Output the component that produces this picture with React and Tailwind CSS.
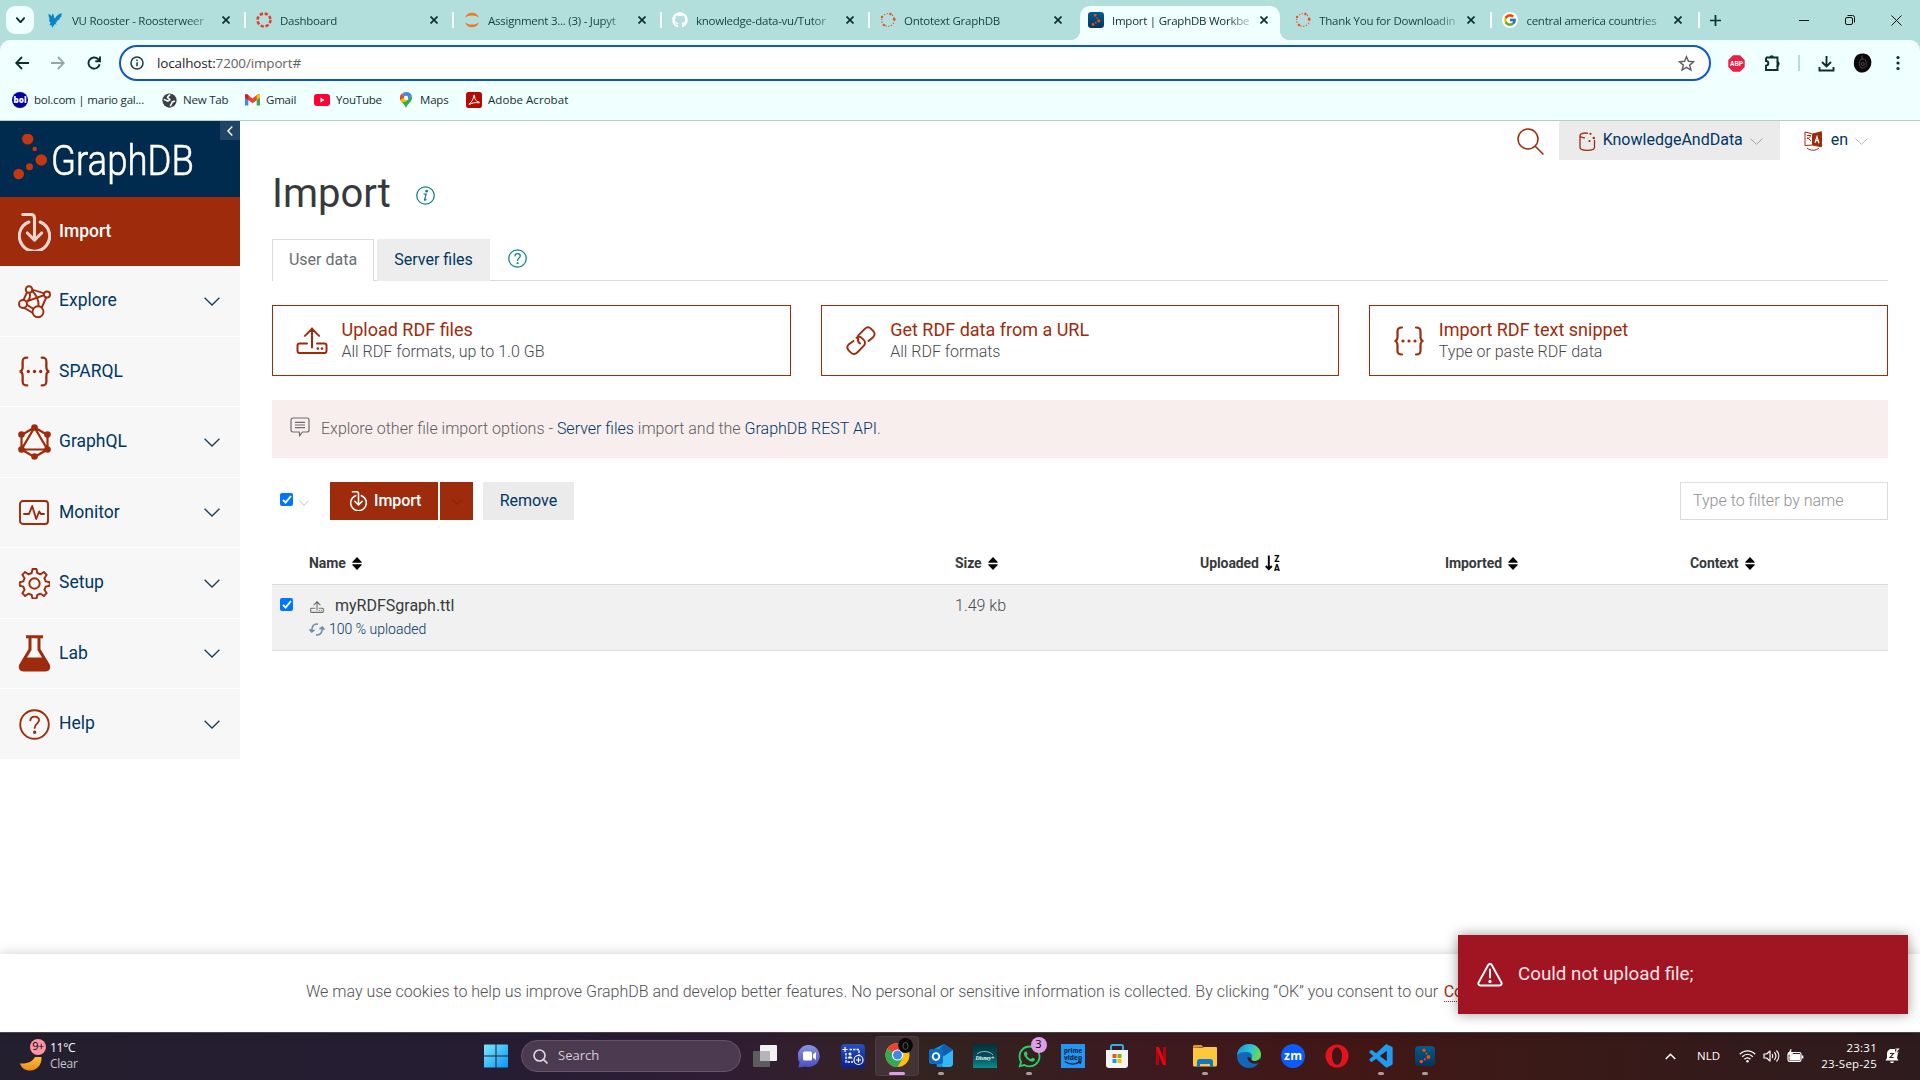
import React from "react";
import { FcGoogle } from "react-icons/fc";
import { FaGithub, FaWhatsapp } from "react-icons/fa";
import { BiLogoVisualStudio } from "react-icons/bi";

const UI = "font-['Open_Sans','Noto_Sans',sans-serif]";

/* ---------- shared drawings ---------- */

function Chevron({ className = "", w = 16, h = 9, sw = 1.3, color = "#003663" }) {
  return (
    <svg className={className} width={w} height={h} viewBox="0 0 16 9" fill="none" stroke={color} strokeWidth={sw} preserveAspectRatio="none">
      <path d="M.6.8 8 8l7.4-7.2" />
    </svg>
  );
}

function Cross({ size = 8, color = "#0b2f2c", sw = 1.7 }) {
  return (
    <svg width={size} height={size} viewBox="0 0 8 8" stroke={color} strokeWidth={sw}>
      <path d="M.5.5l7 7M7.5.5l-7 7" />
    </svg>
  );
}

function GraphDots({ size }) {
  return (
    <svg width={size} height={size} viewBox="0 0 20 20">
      <defs>
        <linearGradient id="gdb" x1="0" y1="0" x2="0" y2="1">
          <stop offset="0" stopColor="#045a8a" />
          <stop offset="1" stopColor="#02365e" />
        </linearGradient>
      </defs>
      <rect width="20" height="20" rx="4" fill="url(#gdb)" />
      <g fill="#f04e16">
        <circle cx="9" cy="4.2" r="1.7" />
        <circle cx="11.3" cy="7.5" r=".9" />
        <circle cx="13.4" cy="11" r="2" />
        <circle cx="9.8" cy="13.3" r="1.1" />
        <circle cx="6.3" cy="15.6" r="1.8" />
      </g>
    </svg>
  );
}

function DashedRing({ color, w = 2.6, dash = "3.3 1.75", r = 6.45 }) {
  return (
    <svg width="16" height="16" viewBox="0 0 16 16" fill="none">
      <circle cx="8" cy="8" r={r} stroke={color} strokeWidth={w} strokeDasharray={dash} />
    </svg>
  );
}

function OntoRing() {
  return (
    <svg width="16" height="16" viewBox="0 0 16 16" fill="none">
      <circle cx="8" cy="8" r="6.4" stroke="#e8613a" strokeWidth="1.3" strokeDasharray="1.2 1.6" />
      <g fill="#e8532a">
        <circle cx="2" cy="5" r="1.2" />
        <circle cx="10.5" cy="2" r="1.2" />
        <circle cx="14.2" cy="7.2" r="1.4" />
        <circle cx="4" cy="13" r="1.3" />
      </g>
    </svg>
  );
}

/* ---------- browser tabs ---------- */

const favicons = {
  vu: (
    <svg width="16" height="16" viewBox="0 0 16 16" fill="#0a84c9">
      <path d="M.5 2c1.500.3 2.500 1.300 3 2.600L4.500 1.500c1.200 1 1.600 2.300 1.500 3.800l1 1.200C8.500 3.500 11 1.500 14 1.200c-.3.800-.3 1.500-1.100 2.200.6.100.7.200.9.300-.7 1.300-1.600 2-2.700 2.500l1 .2c-1.200 1.500-2.200 2-3.500 2.400l.8 1.200-2 .600 1.200 2.200-1.800-.9-2.600 4-.8-3-2 .4 1.200-2.600C.9 9.500.9 8 1.500 6.800 1 5.500.4 3.700.5 2z" />
    </svg>
  ),
  canvas: <DashedRing color="#e2402f" />,
  jupyter: (
    <svg width="16" height="16" viewBox="0 0 16 16" fill="#f37726">
      <path d="M1.200 5.500C2 2.600 4.700.7 8 .7s6 1.900 6.800 4.800C13.400 4.200 10.900 3.400 8 3.400s-5.400.8-6.800 2.100z" />
      <path d="M1.200 10.500c.8 2.900 3.500 4.800 6.800 4.800s6-1.900 6.800-4.800c-1.400 1.300-3.900 2.100-6.800 2.100s-5.400-.8-6.800-2.100z" />
    </svg>
  ),
  github: <FaGithub size={16} color="#ffffff" />,
  onto: <OntoRing />,
  graphdb: <GraphDots size={16} />,
  google: (
    <span className="flex size-4 items-center justify-center rounded-full bg-white">
      <FcGoogle size={14} />
    </span>
  ),
};

const tabs = [
  { icon: "vu", title: "VU Rooster - Roosterweer" },
  { icon: "canvas", title: "Dashboard" },
  { icon: "jupyter", title: "Assignment 3... (3) - Jupyt" },
  { icon: "github", title: "knowledge-data-vu/Tutor" },
  { icon: "onto", title: "Ontotext GraphDB" },
  { icon: "graphdb", title: "Import | GraphDB Workbe", active: true },
  { icon: "onto", title: "Thank You for Downloadin" },
  { icon: "google", title: "central america countries" },
];

function BrowserTab({ icon, title, active, sep, narrow }) {
  return (
    <div
      className={
        "relative flex h-[34px] shrink-0 items-center pl-2 " +
        (narrow ? "w-[207.200px] " : "w-[208px] ") +
        (active ? "text-[#06302c]" : "text-[#173f3b]")
      }
    >
      {active && (
        <>
          <div className="absolute top-0 left-0 h-[34px] w-[200px] rounded-t-[10px] bg-[#f0ffff]" />
          <div className="absolute bottom-0 -left-2.5 size-2.5 bg-[radial-gradient(circle_at_0_0,transparent_10px,#f0ffff_10.500px)]" />
          <div className="absolute right-[-3px] bottom-0 size-2.5 bg-[radial-gradient(circle_at_100%_0,transparent_10px,#f0ffff_10.500px)]" />
        </>
      )}
      <span className="relative mb-[6px] flex size-4 shrink-0 items-center justify-center">{favicons[icon]}</span>
      <span className="relative mb-[4px] ml-2 w-[140px] text-[11.500px] tracking-[-0.250px] whitespace-nowrap [mask-image:linear-gradient(to_right,#000_82%,transparent_104%)]">
        {title}
      </span>
      <span className={"relative mb-[6px] flex w-2 shrink-0 " + (narrow ? "ml-2" : "ml-2.5")}>
        <Cross />
      </span>
      {sep && <span className="absolute top-1.5 right-[2px] h-4 w-0.5 bg-white/90" />}
    </div>
  );
}

function TabStrip() {
  return (
    <div className={"flex h-10 items-start bg-[#b2dfdc] pt-1.5 " + UI}>
      <div className="mr-[6px] ml-1.5 flex size-7 items-center justify-center rounded-[9px] bg-[#f0ffff]">
        <Chevron w={9} h={6} sw={3} color="#0b2f2c" />
      </div>
      {tabs.map((t, i) => (
        <BrowserTab key={t.title} {...t} sep={i !== 4 && i !== 5} narrow={i > 4} />
      ))}
      <div className="ml-[6px] flex h-7 w-4 items-center justify-center">
        <svg width="11" height="11" viewBox="0 0 11 11" stroke="#0b2f2c" strokeWidth="1.700">
          <path d="M5.500 0v11M0 5.500h11" />
        </svg>
      </div>
      <div className="mr-[18px] ml-auto flex h-7 items-center gap-[36px]">
        <svg width="10" height="10" viewBox="0 0 10 10" stroke="#111"><path d="M0 5.500h10" /></svg>
        <svg width="10" height="10" viewBox="0 0 10 10" stroke="#111" fill="none">
          <rect x=".5" y="2.500" width="7" height="7" rx="1.500" />
          <path d="M2.500.5h5a2 2 0 0 1 2 2v5" />
        </svg>
        <svg width="11" height="11" viewBox="0 0 11 11" stroke="#111"><path d="M.5.500l10 10M10.500.500l-10 10" /></svg>
      </div>
    </div>
  );
}

/* ---------- address row ---------- */

function AddressRow() {
  return (
    <div className={"flex h-[46px] items-center pt-0 " + UI}>
      <div className="flex w-[119px] shrink-0 items-center gap-[22px] pl-[15px]">
        <svg width="14" height="14" viewBox="0 0 14 14" fill="none" stroke="#0b2f2c" strokeWidth="1.800"><path d="M14 7H1.500M7 1 1.200 7 7 13" /></svg>
        <svg width="14" height="14" viewBox="0 0 14 14" fill="none" stroke="#8fa9a7" strokeWidth="1.800"><path d="M0 7h12.500M7 1l5.800 6L7 13" /></svg>
        <svg width="14" height="14" viewBox="0 0 14 14" fill="none" stroke="#0b2f2c" strokeWidth="1.900"><path d="M12.600 8.200A5.600 5.600 0 1 1 11 3l1.500 1.700" /><path d="M13 .5v4.700H8.300" /></svg>
      </div>
      <div className="flex h-9 w-[1592px] shrink-0 items-center rounded-full border-2 border-[#0b57d0] bg-white px-1">
        <span className="flex size-6 items-center justify-center rounded-full bg-[#f0ffff]">
          <svg width="14" height="14" viewBox="0 0 14 14" fill="none" stroke="#333" strokeWidth="1.500">
            <circle cx="7" cy="7" r="6" />
            <path d="M7 6.200v4M7 3.500v1.500" />
          </svg>
        </span>
        <span className="ml-[8px] text-[13.500px] tracking-[-0.150px] text-[#5f6363]">
          <span className="text-[#1f1f1f]">localhost:</span>7200/import#
        </span>
        <svg className="mr-[10px] ml-auto" width="17" height="17" viewBox="0 0 18 18" fill="none" stroke="#5c6060" strokeWidth="1.500">
          <path d="m9 1.800 2.100 4.900 5.400.5-4.100 3.500 1.300 5.200L9 13.100l-4.700 2.800 1.300-5.200-4.100-3.500 5.400-.5z" />
        </svg>
      </div>
      <svg className="ml-[17px]" width="17" height="17" viewBox="0 0 17 17">
        <path d="M5 .3h7L16.700 5v7L12 16.700H5L.3 12V5z" fill="#ed1e45" />
        <text x="8.500" y="11" textAnchor="middle" fontSize="7" fontWeight="700" fill="#fff" fontFamily="Liberation Sans" textLength="13" lengthAdjust="spacingAndGlyphs">ABP</text>
      </svg>
      <svg className="ml-[19px]" width="18" height="18" viewBox="0 0 18 18" fill="none" stroke="#0b2f2c" strokeWidth="1.900">
        <path d="M2 3.500h11.500v4.300M2 3.500V7a2.300 2.300 0 0 1 0 4.600V16h11.500v-4.300" />
        <path d="M5.500 3.500a2.200 2.200 0 0 1 4.400 0zM13.500 7.500a2.200 2.200 0 0 1 0 4.400z" fill="#0b2f2c" stroke="none" />
        <path d="M13.500 7v6" />
      </svg>
      <span className="ml-[16px] h-4 w-0.5 bg-[#b2dfdc]" />
      <svg className="ml-[18px]" width="17" height="17" viewBox="0 0 17 17" fill="none" stroke="#0b2f2c" strokeWidth="1.900">
        <path d="M8.500 1v10M4 7l4.500 4.500L13 7M1.500 12v3.500h14V12" />
      </svg>
      <svg className="ml-[18px]" width="19" height="20" viewBox="0 0 19 20">
        <path d="M5 1.500C8 0 12 0 15 2c3 2.500 4 6 3 10-1 4-4 7-8.500 7.500C5 20 2 16.500 1 12.500.5 8 1.500 3.500 5 1.500z" fill="#0a0a0a" />
        <g fill="none" stroke="#555" strokeWidth=".8"><ellipse cx="9.800" cy="10.500" rx="3.500" ry="4.500" /><circle cx="9.800" cy="11" r="1.500" /><path d="M9 2.500v4" /></g>
      </svg>
      <svg className="ml-[24px]" width="4" height="16" viewBox="0 0 4 16" fill="#0b2f2c">
        <circle cx="2" cy="2.500" r="1.600" /><circle cx="2" cy="8" r="1.600" /><circle cx="2" cy="13.500" r="1.600" />
      </svg>
    </div>
  );
}

/* ---------- bookmarks ---------- */

const bookmarks = [
  {
    label: "bol.com | mario gal...",
    width: "w-[127px]",
    icon: (
      <svg width="16" height="16" viewBox="0 0 16 16">
        <circle cx="8" cy="8" r="8" fill="#0000a4" />
        <text x="8" y="11" textAnchor="middle" fontSize="8" fontWeight="800" fill="#fff" fontFamily="Open Sans" textLength="13">bol</text>
      </svg>
    ),
  },
  {
    label: "New Tab",
    width: "w-[61px]",
    icon: (
      <svg width="15" height="15" viewBox="0 0 16 16">
        <circle cx="8" cy="8" r="7.600" fill="#3c4043" />
        <path d="M8.500 1.600c-1 1.800-2.600 1.700-2.600 3.200 0 1.400 2.500.8 2.500 2.200 0 1.200-1.900 1-2.400 1.600L2 6.800M9 14.200c0-2.200 1.600-2.600 1.600-4 0-1.300 1.500-.7 3.200-1.600" fill="none" stroke="#f0ffff" strokeWidth="1.700" />
      </svg>
    ),
  },
  {
    label: "Gmail",
    width: "w-[48px]",
    icon: (
      <svg width="15" height="12" viewBox="0 0 15 12">
        <path d="M0 2v9.500h3.300V4.500z" fill="#4285f4" />
        <path d="M15 2v9.500h-3.300V4.500z" fill="#34a853" />
        <path d="M0 1.500C0 .5 1.500 0 2.500.6l5 3.900 5-3.900C13.500 0 15 .5 15 1.500v2.200L7.500 9.300 0 3.700z" fill="#ea4335" />
        <path d="M12.500.6C13.500 0 15 .5 15 1.500v2.200l-3.300 2.400V1.300z" fill="#fbbc04" />
        <path d="M2.500.6C1.500 0 0 .5 0 1.500v2.200l3.300 2.400V1.300z" fill="#c5221f" />
      </svg>
    ),
  },
  {
    label: "YouTube",
    width: "w-[62px]",
    icon: (
      <svg width="16" height="12" viewBox="0 0 16 12"><rect width="16" height="12" rx="3" fill="#ff0033" /><path d="m6.500 3.500 4 2.500-4 2.500z" fill="#fff" /></svg>
    ),
  },
  {
    label: "Maps",
    width: "w-[46px]",
    icon: (
      <svg width="12" height="16" viewBox="0 0 12 16">
        <path d="M6 0a6 6 0 0 1 6 6c0 4-4.500 5.500-6 10C4.500 11.500 0 10 0 6a6 6 0 0 1 6-6z" fill="#34a853" />
        <path d="M6 0a6 6 0 0 1 5.600 4L6 9.500 2 10.500C.8 9.300 0 8 0 6a6 6 0 0 1 6-6z" fill="#fbbc04" />
        <path d="M6 0a6 6 0 0 1 5.600 4L8 7.500 2 2z" fill="#4285f4" />
        <path d="M1.500 2 5 5 0 8C-.2 5.500 0 3.700 1.500 2z" fill="#ea4335" />
        <circle cx="6" cy="6" r="2.200" fill="#fff" />
      </svg>
    ),
  },
  {
    label: "Adobe Acrobat",
    width: "w-[90px] tracking-[0.050px]",
    icon: (
      <svg width="16" height="16" viewBox="0 0 16 16"><rect width="16" height="16" rx="2.500" fill="#b30b00" /><path d="M3 12c2-1 4.500-4.500 4.700-8.300.1-1 1-.8.900.1C8.300 7 10 9.600 13 10c.8.200.5 1-.2.900C9.500 10.200 6 10.800 3.600 12.400c-.6.300-1-.1-.6-.4z" fill="none" stroke="#fff" strokeWidth="1" /></svg>
    ),
  },
];

function Bookmarks() {
  return (
    <div className={"flex h-[35px] items-center pb-[7px] pl-3 text-[11.500px] tracking-[-0.200px] text-[#15302e] " + UI}>
      {bookmarks.map((b) => (
        <div key={b.label} className="flex items-center">
          <span className="flex w-4 justify-center">{b.icon}</span>
          <span className={"ml-1.5 whitespace-nowrap " + b.width}>{b.label}</span>
        </div>
      ))}
    </div>
  );
}

/* ---------- application icons ---------- */

function ImportIcon({ size, color, sw = 2 }) {
  return (
    <svg width={size} height={size * 1.15} viewBox="0 0 32 37" fill="none" stroke={color} strokeWidth={sw} strokeLinecap="round" strokeLinejoin="round">
      <path d="M10.500 8.800a14.800 14.800 0 1 0 11 0" />
      <path d="M4.500 1.500h8c2.500 0 3.500 1.200 3.500 3.500v21M9 19.500l7 7 7-7" />
    </svg>
  );
}

function Braces({ size }) {
  return (
    <svg width={size} height={size} viewBox="0 0 32 32" fill="none" stroke="#9d2b0c" strokeWidth="2.200" strokeLinecap="round">
      <path d="M9 2.500c-3.500 0-4.500 1-4.500 4v5c0 3-1 4.500-3 4.500 2 0 3 1.500 3 4.500v5c0 3 1 4 4.500 4M23 2.500c3.500 0 4.500 1 4.500 4v5c0 3 1 4.500 3 4.500-2 0-3 1.500-3 4.500v5c0 3-1 4-4.500 4" />
      <g fill="#9d2b0c" stroke="none"><circle cx="10" cy="16" r="1.600" /><circle cx="16" cy="16" r="1.600" /><circle cx="22" cy="16" r="1.600" /></g>
    </svg>
  );
}

function UploadIcon({ size, color = "#9d2b0c", sw = 2 }) {
  return (
    <svg width={size} height={size * 0.85} viewBox="0 0 32 27" fill="none" stroke={color} strokeWidth={sw} strokeLinecap="round" strokeLinejoin="round">
      <path d="M11 16.500H3.500a2 2 0 0 0-2 2v5.500a2 2 0 0 0 2 2h25a2 2 0 0 0 2-2v-5.500a2 2 0 0 0-2-2H21M16 20.500V1.500M9 8.800l7-7.300 7 7.300" />
      <g fill={color} stroke="none"><circle cx="21.800" cy="21.500" r="1.300" /><circle cx="26" cy="21.500" r="1.300" /></g>
    </svg>
  );
}

function QuestionIcon({ size, color, sw = 1.3 }) {
  return (
    <svg width={size} height={size} viewBox="0 0 20 20" fill="none" stroke={color} strokeWidth={sw} strokeLinecap="round">
      <circle cx="10" cy="10" r="9.200" />
      <path d="M7.300 7.300c.2-1.600 1.200-2.400 2.800-2.400 1.700 0 2.800 1 2.800 2.400 0 2.200-2.800 2.100-2.800 4.900" />
      <circle cx="10.100" cy="15" r=".5" fill={color} />
    </svg>
  );
}

const R = "#9d2b0c";
const menuIcons = {
  import: <ImportIcon size={33} color="#ecd5ce" sw={3} />,
  explore: (
    <svg width="33" height="33" viewBox="0 0 33 33" fill="none" stroke={R} strokeWidth="1.900">
      <path d="M9.200 7 5.200 15.500M8 16.700 26.500 10M13.500 5.500c5 4 7.500 9 7 16M28.500 12 23.500 23M9.500 16.500c2-2.200 3-5.500 2.200-9M14.500 4.800c6 1.500 9.500 2.500 12 4" />
      <g fill="#f7f7f7"><circle cx="11" cy="4.500" r="3.300" /><circle cx="29" cy="9.500" r="3" /><circle cx="5" cy="19" r="4" /><circle cx="20" cy="26.800" r="5.500" /></g>
      <path d="m6 22.800 8.500 5M8.800 19.800l6.500 4" />
    </svg>
  ),
  sparql: <Braces size={33} />,
  graphql: (
    <svg width="33" height="36" viewBox="0 0 33 36" fill="none" stroke={R} strokeWidth="2.200">
      <path d="M16.500 3.500 29.500 11v14.500L16.500 33 3.500 25.500V11zM16.500 3.500 29.500 25.500h-26z" />
      <g fill={R} stroke="none"><circle cx="16.500" cy="3.500" r="3.300" /><circle cx="29.500" cy="10.500" r="3.300" /><circle cx="29.500" cy="25.500" r="3.300" /><circle cx="16.500" cy="32.500" r="3.300" /><circle cx="3.500" cy="25.500" r="3.300" /><circle cx="3.500" cy="10.500" r="3.300" /></g>
    </svg>
  ),
  monitor: (
    <svg width="30" height="25" viewBox="0 0 30 25" fill="none" stroke={R} strokeWidth="1.900" strokeLinejoin="round" strokeLinecap="round">
      <rect x="1" y="1" width="28" height="23" rx="3" />
      <path d="M5 14h5l3.200-8 4 13 3-7.500 1.500 2.500H25" />
    </svg>
  ),
  setup: (
    <svg width="31" height="31" viewBox="0 0 31 31" fill="none" stroke={R} strokeWidth="1.900" strokeLinejoin="round">
      <circle cx="15.500" cy="15.500" r="5.200" />
      <path d="M13.500 1h4l.8 4 3.200 1.300 3.400-2.300 2.800 2.800-2.300 3.400 1.300 3.200 4 .8v3.600l-4 .8-1.300 3.200 2.300 3.400-2.800 2.800-3.400-2.300-3.200 1.300-.8 3.500h-4l-.8-3.500L9.500 25.700 6.100 28l-2.800-2.800 2.300-3.400-1.300-3.200-3.500-.8v-3.600l3.500-.8 1.300-3.200-2.300-3.400L6.100 4l3.400 2.300L12.700 5z" />
    </svg>
  ),
  lab: (
    <svg width="33" height="37" viewBox="0 0 33 37" fill="none" stroke={R} strokeWidth="3">
      <path d="M8 1.800h17M12 2v12.500L2.500 30.500c-1 2.500.3 4.500 3 4.500h22c2.700 0 4-2 3-4.500L21 14.500V2" />
      <path d="M8 22.500h17L30.500 32l-3 3h-22l-3-3z" fill={R} stroke="none" />
    </svg>
  ),
  help: <QuestionIcon size={31} color={R} sw={1.200} />,
};

const menu = [
  { id: "import", label: "Import", active: true },
  { id: "explore", label: "Explore", sub: true },
  { id: "sparql", label: "SPARQL" },
  { id: "graphql", label: "GraphQL", sub: true },
  { id: "monitor", label: "Monitor", sub: true },
  { id: "setup", label: "Setup", sub: true },
  { id: "lab", label: "Lab", sub: true },
  { id: "help", label: "Help", sub: true },
];

function Sidebar() {
  return (
    <aside className="w-60 shrink-0">
      <div className="relative flex h-[76px] items-center bg-[#002b4f] pl-3">
        <svg className="mt-[-3px]" width="36" height="48" viewBox="0 0 36 48" fill="#c4370f">
          <circle cx="15.700" cy="5" r="5.600" /><circle cx="22.700" cy="15" r="2.300" /><circle cx="29.300" cy="26" r="5.800" /><circle cx="17.500" cy="32.800" r="3.500" /><circle cx="6.700" cy="40" r="5.300" />
        </svg>
        <span className="mt-[3px] ml-[2.500px] origin-left scale-x-[0.870] text-[42px] leading-none font-light text-white [-webkit-text-stroke:0.600px_white]">GraphDB</span>
        <span className="absolute top-0 right-0 flex h-[19px] w-5 items-center justify-center bg-[#1f4466]">
          <svg width="6" height="10" viewBox="0 0 6 10" fill="none" stroke="#fff" strokeWidth="1.400"><path d="M5.300.6 1 5l4.300 4.400" /></svg>
        </span>
      </div>
      {menu.map((m) => (
        <div
          key={m.id}
          className={
            "flex items-center text-[17.500px] " +
            (m.active ? "h-[69.300px] bg-[#9d2b0c] font-medium text-white" : "h-[70.500px] border-b border-white bg-[#f7f7f7] text-[#003663]")
          }
        >
          <span className="ml-[17px] flex w-[34px] justify-center">{menuIcons[m.id]}</span>
          <span className="ml-2 pb-px">{m.label}</span>
          {m.sub && <Chevron className="mr-[20px] ml-auto" color="#1a3c58" w={16} />}
        </div>
      ))}
    </aside>
  );
}

/* ---------- main pane ---------- */

function TopBar() {
  return (
    <div className="flex h-[39px] items-center justify-end pr-[52px]">
      <svg className="mt-0.5 mr-[15px]" width="27" height="27" viewBox="0 0 27 27" fill="none" stroke={R} strokeWidth="1.500" strokeLinecap="round">
        <circle cx="11" cy="11" r="10" /><path d="m18.500 18.500 7.500 7.500" />
      </svg>
      <div className="flex h-[39px] w-[221px] items-center bg-[#ebebeb] pl-5 text-[#003663]">
        <svg className="mt-0.5" width="17" height="19" viewBox="0 0 17 19" fill="none" stroke={R} strokeWidth="1.300">
          <path d="M9 1.300c-4-.8-8 .3-8 2.200v12c0 1.600 3.300 2.800 7.300 2.800s7.200-1.200 7.200-2.800V8M1 3.800c.5 1.200 2.500 1.900 5 2" />
          <g fill={R} stroke="none"><circle cx="11.500" cy="1.800" r="1.100" /><circle cx="14.800" cy="6" r="1.200" /><circle cx="10.500" cy="9" r="1.100" /></g>
        </svg>
        <span className="ml-[7px] pb-px text-base">KnowledgeAndData</span>
        <Chevron className="mt-0.5 ml-[7px]" w={13} h={7} color="#9aa0a5" sw={1.200} />
      </div>
      <div className="ml-6 flex items-center text-[#003663]">
        <svg width="18" height="20" viewBox="0 0 18 20" fill="none" stroke={R}>
          <path d="M8.500 3 17.500.8v15L8.500 14z" fill={R} />
          <path d="M8.500 3 1 1v13.500l7.500-.5M3 4.500h4M3 7.500c2 0 3.500-1.500 3.500-3M3.500 6.500 7 10M3 17c3.500 3 9 3 12 0" />
          <path d="m11 11.800 2-6 2 6.500M11.500 9.700h3" stroke="#fff" strokeWidth="1.200" />
        </svg>
        <span className="ml-[9px] pb-px text-base">en</span>
        <Chevron className="mt-0.5 ml-[7px]" w={13} h={7} color="#b0b5b9" sw={1.200} />
      </div>
    </div>
  );
}

const sources = [
  { title: "Upload RDF files", sub: "All RDF formats, up to 1.0 GB", icon: <UploadIcon size={32} /> },
  {
    title: "Get RDF data from a URL",
    sub: "All RDF formats",
    icon: (
      <svg width="30" height="30" viewBox="0 0 30 30" fill="none" stroke={R} strokeWidth="1.900" strokeLinecap="round">
        <path d="M12.300 13.500c-1-1.700-.5-3.500.5-4.600l6-6c2-2 4.300-2.100 6.300-.1l2 2c2 2 2 4.400 0 6.400L22.500 15M10.500 11.700c2-1.300 4.300-.8 5.700.6l1.500 1.500c1.900 1.900 1.700 4.300 0 6l-6.500 6.700c-2 2-4.300 2.100-6.300.1l-2-2c-2-2-2-4.400 0-6.400L7.500 15M14 17.500c-1.500-1-2-2-2.200-3.500" />
      </svg>
    ),
  },
  { title: "Import RDF text snippet", sub: "Type or paste RDF data", icon: <Braces size={32} /> },
];

function Check() {
  return (
    <span className="flex size-[13px] shrink-0 items-center justify-center rounded-[2px] bg-[#0075ff]">
      <svg width="10" height="9" viewBox="0 0 10 9" fill="none" stroke="#fff" strokeWidth="1.900"><path d="m1 4.800 2.600 2.700L9 1" /></svg>
    </span>
  );
}

function SortIcon() {
  return (
    <svg width="10" height="13" viewBox="0 0 10 13" fill="#000">
      <path d="M5 0l4.500 4.700c.5.600.2 1.100-.5 1.100H1C.3 5.800 0 5.300.5 4.700zM5 13l4.500-4.700c.5-.6.2-1.100-.5-1.100H1c-.7 0-1 .5-.5 1.100z" />
    </svg>
  );
}

function SortZA() {
  return (
    <svg width="16" height="16" viewBox="0 0 16 16">
      <path d="M3.800.5v13M.8 11l3 3.200 3-3.200" stroke="#000" strokeWidth="1.900" fill="none" />
      <text x="9.300" y="6.800" fontSize="8.500" fontWeight="900" fontFamily="Roboto">Z</text>
      <text x="9" y="15.500" fontSize="8.500" fontWeight="900" fontFamily="Roboto">A</text>
    </svg>
  );
}

const columns = ["Size", "Uploaded", "Imported", "Context"];

function Main() {
  return (
    <main className="flex-1">
      <TopBar />
      <div className="mr-8 ml-8 flex flex-col">
        <div className="flex h-[66px] items-center">
          <h1 className="mt-0.5 text-[40px] leading-none text-[#373a3c]">Import</h1>
          <svg className="mt-[5px] ml-[25px]" width="19" height="19" viewBox="0 0 20 20" fill="none" stroke="#0d8182" strokeWidth="1.300">
            <circle cx="10" cy="10" r="9.200" />
            <path d="M8 8.500h2.700L9 14.300c-.2.800.9.700 2-.3" />
            <circle cx="11.200" cy="5.400" r=".8" fill="#0d8182" />
          </svg>
        </div>

        <div className="mt-[13px] flex h-[42px] items-end border-b border-[#dcdcdc]">
          <div className="-mb-px flex h-[42px] w-[102px] items-center justify-center border border-b-0 border-[#dcdcdc] bg-white pb-0.5 text-[#6a6e71]">User data</div>
          <div className="-mb-px ml-[3px] flex h-[42px] w-[113px] items-center justify-center bg-[#ededed] pb-px text-[#003663]">Server files</div>
          <span className="mb-[12px] ml-[18px]"><QuestionIcon size={19} color="#0d8182" /></span>
        </div>

        <div className="mt-6 grid grid-cols-3 gap-[30px]">
          {sources.map((s) => (
            <div key={s.title} className="flex h-[71px] items-center border border-[#9d2b0c] pl-[23px]">
              <span className="flex w-8 justify-center">{s.icon}</span>
              <div className="ml-[13.500px] pb-0.5">
                <div className="text-[18px] leading-6 text-[#9d2b0c]">{s.title}</div>
                <div className="leading-5 font-light text-[#45494c]">{s.sub}</div>
              </div>
            </div>
          ))}
        </div>

        <div className="mt-6 flex h-[58px] items-center bg-[#f7eeed] pl-[18px]">
          <svg className="mb-1" width="20" height="20" viewBox="0 0 20 20" fill="none" stroke="#6b6e70" strokeWidth="1.200" strokeLinejoin="round">
            <path d="M3 1h14a2 2 0 0 1 2 2v10a2 2 0 0 1-2 2h-4.500L9.500 19v-4H3a2 2 0 0 1-2-2V3a2 2 0 0 1 2-2zM5 5.300h10M5 8h10M5 10.700h10" />
          </svg>
          <span className="ml-[11px] font-light text-[#5b5e60]">
            Explore other file import options - <span className="text-[#003663]">Server files</span> import and the{" "}
            <span className="text-[#003663]">GraphDB REST API</span>.
          </span>
        </div>

        <div className="mt-6 flex h-[38px] items-center">
          <span className="mb-[3px] ml-2"><Check /></span>
          <Chevron className="mt-1 ml-[6px]" w={10} h={6} color="#b3b6b8" />
          <div className="ml-[21px] flex h-[38px] w-[108px] items-center bg-[#9d2b0c] pl-[20px] font-medium text-white">
            <ImportIcon size={17} color="#fff" sw={3} />
            <span className="ml-[7px] tracking-[-0.100px]">Import</span>
          </div>
          <div className="ml-0.5 flex h-[38px] w-[33px] items-center justify-center bg-[#9d2b0c]">
            <Chevron className="mt-0.5" w={10} h={6} color="#7d200a" />
          </div>
          <div className="ml-2.5 flex h-[38px] w-[91px] items-center justify-center bg-[#ebebeb] text-[#003663]">Remove</div>
          <div className="ml-auto flex h-[38px] w-[208px] items-center border border-[#dcdcdc] pl-3 font-light text-[#8e9092]">Type to filter by name</div>
        </div>

        <div className="mt-[23px] mb-px grid h-[40px] grid-cols-[683px_245px_245px_245px_1fr] items-center text-[14px] font-bold text-[#373a3c]">
          <div className="flex items-center gap-[6px] pl-[37px] tracking-[-0.100px]">Name <SortIcon /></div>
          {columns.map((c) => (
            <div key={c} className="flex items-center gap-[6px] tracking-[-0.080px]">
              {c} {c === "Uploaded" ? <SortZA /> : <SortIcon />}
            </div>
          ))}
        </div>
        <div className="grid h-[67px] grid-cols-[683px_1fr] border-y border-[#dcdcdc] bg-[#f1f1f1]">
          <div className="pt-[9px] pl-2">
            <div className="flex h-6 items-center">
              <span className="mb-[3px]"><Check /></span>
              <span className="mt-0.5 ml-[17px]"><UploadIcon size={14} color="#6b6f72" sw={2.500} /></span>
              <span className="ml-[11px] text-[#373a3c]">myRDFSgraph.ttl</span>
            </div>
            <div className="ml-[29px] flex h-[23px] items-center text-[14px] font-light text-[#003663]">
              <svg width="16" height="13" viewBox="0 0 16 13" fill="none" stroke="#6d8ca8" strokeWidth="1.600">
                <path d="M9 1.200C5 .3 2.500 3 2.800 8.500M.5 6.300l2.300 2.600 2.700-2M7 11.800c4 .9 6.500-1.800 6.200-7.300M15.500 6.700l-2.300-2.600-2.700 2" />
              </svg>
              <span className="ml-[4px]">100 % uploaded</span>
            </div>
          </div>
          <div className="pt-[9px] leading-6 font-light text-[#4a4d50]">1.49 kb</div>
        </div>
      </div>
    </main>
  );
}

/* ---------- taskbar ---------- */

const taskIcons = [
  <svg width="24" height="24" viewBox="0 0 24 24"><rect x="7" y="1" width="17" height="16" rx="1" fill="#f2f2f2" /><rect x="0" y="7" width="17" height="16" rx="1" fill="#5d5d5d" /><path d="M7 7h10v10H7z" fill="#b5b5b5" /></svg>,
  <svg width="23" height="23" viewBox="0 0 23 23"><defs><linearGradient id="chat" x2="0" y2="1"><stop stopColor="#8a93de" /><stop offset="1" stopColor="#4a4fc4" /></linearGradient></defs><path d="M11.500 0a11 11 0 1 1-4 21.500L.5 22.500l1-5.500A11 11 0 0 1 11.500 0z" fill="url(#chat)" /><rect x="5" y="6.500" width="9" height="9" rx="1.500" fill="#fff" /><path d="m15 9.500 3-2.500v8l-3-2.500z" fill="#fff" /></svg>,
  <svg width="24" height="24" viewBox="0 0 24 24" fill="none" stroke="#fff"><defs><linearGradient id="snip" x2="0" y2="1"><stop stopColor="#2850c0" /><stop offset="1" stopColor="#0b1f8f" /></linearGradient></defs><rect width="24" height="24" rx="4" fill="url(#snip)" stroke="none" /><path d="M4 3v5M1.500 5.500h5" strokeWidth="1.200" /><path d="M8.500 5.500H18v6M5 9v9h7" strokeWidth="1.300" strokeDasharray="2.500 1" /><circle cx="9" cy="10" r="1.500" fill="#fff" stroke="none" /><path d="M6.500 14.500c.5-3 4.500-3 5 0z" fill="#fff" stroke="none" /><circle cx="17.500" cy="16" r="4.500" strokeWidth="1.200" /><path d="M17.500 13.500v5M15 16h5" strokeWidth="1.200" /></svg>,
  <svg width="32" height="30" viewBox="0 0 32 30"><g transform="translate(4.500 5)"><circle cx="12" cy="12" r="12" fill="#fbc116" /><path d="M12 12 1.600 6A12 12 0 0 1 22.400 6z" fill="#ea4335" /><path d="M1.600 6A12 12 0 0 0 12 24l5.200-9L12 12z" fill="#34a853" /><circle cx="12" cy="12" r="5.600" fill="#fff" /><circle cx="12" cy="12" r="4.500" fill="#4285f4" /></g><ellipse cx="24.500" cy="7.500" rx="7.300" ry="7.500" fill="#080808" /><ellipse cx="24.500" cy="8" rx="2.500" ry="3.500" fill="none" stroke="#666" strokeWidth=".8" /></svg>,
  <svg width="25" height="24" viewBox="0 0 25 24"><path d="M5 5 15 0l9 6v13a4 4 0 0 1-4 4H8z" fill="#1490df" /><path d="m24 6-14 9 4 8h6a4 4 0 0 0 4-4z" fill="#35b8f1" /><path d="m15 0 9 6-9 6-6-5z" fill="#0f5fae" /><rect y="5" width="14" height="15" rx="2" fill="#0f6cbd" /><circle cx="7" cy="12.500" r="3.300" fill="none" stroke="#fff" strokeWidth="1.800" /></svg>,
  <svg width="24" height="24" viewBox="0 0 24 24"><defs><linearGradient id="dis" x2="0" y2="1"><stop stopColor="#02303c" /><stop offset=".55" stopColor="#06505c" /><stop offset="1" stopColor="#0b8d8a" /></linearGradient></defs><rect width="24" height="24" fill="url(#dis)" /><path d="M4 10c5-4 13-3 16 1" stroke="#bfe9ea" strokeWidth=".7" fill="none" /><text x="12" y="16" textAnchor="middle" fontSize="7" fontStyle="italic" fontWeight="700" fill="#fff" fontFamily="Liberation Serif" textLength="19" lengthAdjust="spacingAndGlyphs">Disney+</text></svg>,
  <span className="relative"><FaWhatsapp size={25} color="#25d366" /><span className="absolute -top-[7px] -right-[5px] flex size-4 items-center justify-center rounded-full bg-[#dc9ee8] text-[11px] text-black">3</span></span>,
  <svg width="24" height="24" viewBox="0 0 24 24"><rect width="24" height="24" fill="#2196f3" /><g fontFamily="Open Sans" fontSize="7" fontWeight="700" fill="#0b1b33" textAnchor="middle"><text x="12" y="8.500" textLength="18" lengthAdjust="spacingAndGlyphs">prime</text><text x="12" y="15.500" textLength="18" lengthAdjust="spacingAndGlyphs">video</text></g><path d="M4 17.500c5 3.500 11 3.500 15 0M17 17h3l-1 3" fill="none" stroke="#0b1b33" strokeWidth="1.200" /></svg>,
  <svg width="24" height="24" viewBox="0 0 24 24"><path d="M6 7V2.500A1.500 1.500 0 0 1 7.500 1h9A1.500 1.500 0 0 1 18 2.500V7" fill="none" stroke="#2bb0ee" strokeWidth="2" /><path d="M1 6h22v15a3 3 0 0 1-3 3H4a3 3 0 0 1-3-3z" fill="#f4f4f4" /><path fill="#f25022" d="M7.500 10h4v4h-4z" /><path fill="#7fba00" d="M12.500 10h4v4h-4z" /><path fill="#00a4ef" d="M7.500 15h4v4h-4z" /><path fill="#ffb900" d="M12.500 15h4v4h-4z" /></svg>,
  <svg width="10" height="18" viewBox="0 0 10 18"><path d="M0 0h3v18H0zM7 0h3v18H7z" fill="#b1060f" /><path d="M0 0h3l7 18H7z" fill="#e50914" /></svg>,
  <svg width="24" height="22" viewBox="0 0 24 22"><path d="M0 1.500C0 .5.500 0 1.500 0h7l2 2.500H0z" fill="#e09b1c" /><path d="M0 2.500 9 3l2-1h12c.6 0 1 .5 1 1v17c0 .8-.5 1.500-1.500 1.500h-21C.6 21.500 0 21 0 20z" fill="#fdc93c" /><path d="M4 22v-5.500C4 15 5 14 6.500 14h11c1.500 0 2.500 1 2.500 2.500V22h-3v-3H7v3z" fill="#1377c9" /></svg>,
  <svg width="24" height="24" viewBox="0 0 24 24"><defs><linearGradient id="edge" x2="1" y2=".3"><stop stopColor="#1a8fd8" /><stop offset=".6" stopColor="#2fc3d6" /><stop offset="1" stopColor="#62d957" /></linearGradient></defs><circle cx="12" cy="12" r="12" fill="#1267bd" /><path d="M0 11C1 4 6 0 12 0c7 0 12 5 12 10.500 0 4-3 6.500-6.500 6.500-3 0-4-1.500-3-3 1.500-2.500 0-6-5-6C5 8 1.500 9 0 11z" fill="url(#edge)" /><path d="M14.500 14c-1 1.500 0 3 3 3 2 0 4-.8 5.300-2.300L24 17l-2 2c-5 2-12-.5-11.500-6z" fill="#42171c" /></svg>,
  <svg width="24" height="24" viewBox="0 0 24 24"><circle cx="12" cy="12" r="12" fill="#0b5cff" /><text x="12" y="16" textAnchor="middle" fontSize="12" fontWeight="700" fill="#fff" fontFamily="Open Sans" textLength="18">zm</text></svg>,
  <svg width="24" height="24" viewBox="0 0 24 24"><ellipse cx="12" cy="12" rx="11.500" ry="11.500" fill="#e3121f" /><ellipse cx="12" cy="12" rx="5" ry="8.700" fill="#3f1617" /></svg>,
  <BiLogoVisualStudio size={28} color="#1f9cf0" />,
  <GraphDots size={20} />,
];

const running = { 4: true, 6: true, 10: true, 14: true, 15: true };

function Taskbar() {
  return (
    <footer
      className={
        "flex h-12 shrink-0 items-center border-t border-[#514a55] bg-[linear-gradient(90deg,#241f2f_0%,#261d33_28%,#2f1c35_37%,#33202a_43%,#33231f_49%,#3c1a20_59%,#421716_70%,#3a1a17_80%,#2e1b1e_100%)] pb-px text-xs text-white " +
        UI
      }
    >
      <div className="flex w-[474px] items-center pl-5">
        <span className="relative flex h-[29px] w-[26px] items-end">
          <svg width="23" height="14" viewBox="0 0 23 14"><defs><linearGradient id="moon" x2="0" y2="1"><stop stopColor="#fbbf3c" /><stop offset="1" stopColor="#f08a1c" /></linearGradient></defs><path d="M0 6.500C8 7 13 4 15 0h6.500C22 8 17 13.500 10 13.500 5 13.500 1.500 11 0 6.500z" fill="url(#moon)" /></svg>
          <span className="absolute -top-[3px] left-[10px] flex size-4 items-center justify-center rounded-full bg-[#ff94a0] text-[11px] tracking-[-0.500px] text-black">9+</span>
        </span>
        <span className="ml-[4px] text-[12px] leading-4 tracking-[-0.250px]">
          11°C<br /><span className="text-[#c9c6ce]">Clear</span>
        </span>
      </div>
      <span className="flex w-11 justify-center">
        <svg width="24" height="24" viewBox="0 0 24 24"><defs><linearGradient id="win" x2="1" y2="1"><stop stopColor="#7be9fd" /><stop offset="1" stopColor="#0a93f5" /></linearGradient></defs><path d="M0 1.500A.9.900 0 0 1 1 .5h10.500v11H0zM12.500.5H23a.9.900 0 0 1 1 1v10H12.500zM0 12.500h11.500v11H1a.9.900 0 0 1-1-1zM12.500 12.500H24v10a.9.900 0 0 1-1 1H12.500z" fill="url(#win)" /></svg>
      </span>
      <div className="ml-[3px] flex h-8 w-[220px] items-center rounded-full border border-[#685468] bg-[#4c3a50] pl-[11px] text-[13px] text-[#d6cfd8]">
        <svg width="15" height="15" viewBox="0 0 15 15" fill="none" stroke="#dedbe0" strokeWidth="1.600"><circle cx="6.500" cy="6.500" r="5.500" /><path d="m10.500 10.500 4 4" /></svg>
        <span className="ml-[10px]">Search</span>
      </div>
      <div className="ml-[2px] flex">
        {taskIcons.map((icon, i) => (
          <span
            key={i}
            className={
              "relative flex h-10 w-11 items-center justify-center " +
              (i === 3 ? "rounded bg-white/8 shadow-[inset_0_0_0_1px_rgba(255,255,255,0.060)]" : "")
            }
          >
            <span className={i === 3 ? "mb-1.5" : ""}>{icon}</span>
            {i === 3 && <span className="absolute bottom-[1px] h-[3px] w-4 rounded-full bg-[#dc9ee8]" />}
            {running[i] && <span className="absolute bottom-[1px] h-[3px] w-1.5 rounded-full bg-[#a89da0]" />}
          </span>
        ))}
      </div>
      <div className="ml-auto flex items-center pr-[20px]">
        <svg width="11" height="7" viewBox="0 0 11 7" fill="none" stroke="#fff" strokeWidth="1.500"><path d="M.8 6 5.500 1.200 10.200 6" /></svg>
        <span className="ml-[21px] w-[25px] text-[11.500px]">NLD</span>
        <svg className="ml-[17px]" width="17" height="14" viewBox="0 0 17 14" fill="none" stroke="#fff" strokeWidth="1.300"><path d="M.8 5.300c4.500-4.700 11-4.700 15.400 0M3.200 7.800c3.200-3.200 7.400-3.200 10.600 0M5.500 10.200c1.800-1.900 4.200-1.900 6 0" /><circle cx="8.500" cy="12.300" r="1.200" fill="#fff" stroke="none" /></svg>
        <svg className="ml-[7px]" width="17" height="14" viewBox="0 0 17 14" fill="none" stroke="#fff" strokeWidth="1.200" strokeLinejoin="round"><path d="M1 5v4h2.500L7 12V2L3.500 5zM9 5c.9 1.200.9 2.800 0 4M11.300 3.200c2 2.300 2 5.300 0 7.600M13.500 1.500c3 3.300 3 7.700 0 11" /></svg>
        <svg className="ml-[7px]" width="17" height="14" viewBox="0 0 17 14" fill="none" stroke="#fff" strokeWidth="1.200"><rect x="1" y="3.500" width="13" height="9" rx="1.800" /><path d="M6 5.500h6.500V11H3V9z" fill="#fff" /><path d="M15.500 6.500v3" strokeWidth="1.700" /><path d="M4 0 1 5.500h2L2.500 9 6 4H4z" fill="#fff" strokeWidth=".5" /></svg>
        <div className="ml-[13px] w-[60px] text-right text-[11.500px] leading-4 tracking-[0.250px] whitespace-nowrap">
          23:31<br />23-Sep-25
        </div>
        <svg className="ml-[8px]" width="15" height="16" viewBox="0 0 15 16"><path d="M2 10V6c0-3 2-5 5-5h3v4h3l-1 5 1.500 2.500H.5z" fill="#fff" /><path d="M5 13.500h4c-.5 2-3.500 2-4 0z" fill="#fff" /><path d="M5 5.500h3.500L5 9.500h3.500" fill="none" stroke="#331a1c" strokeWidth="1.100" /><path d="M10.500 1h3L10.500 4.200h3" fill="none" stroke="#fff" strokeWidth="1.100" /></svg>
      </div>
    </footer>
  );
}

export default function App() {
  return (
    <div className="flex h-[1080px] w-[1920px] flex-col overflow-hidden bg-white font-['Roboto',sans-serif] text-base">
      <TabStrip />
      <div className="bg-[#b2dfdc]">
        <div className="h-[81px] rounded-t-[10px] border-b border-[#b4cecc] bg-[#f0ffff]">
          <AddressRow />
          <Bookmarks />
        </div>
      </div>
      <div className="relative flex h-[911px] flex-col">
        <div className="flex min-h-0 flex-1">
          <Sidebar />
          <Main />
        </div>
        <div className="flex h-[78px] shrink-0 items-center bg-white pb-[2px] pl-[306px] font-light whitespace-nowrap text-[#4f5255] shadow-[0_0_12px_rgba(0,0,0,0.200)]">
          We may use cookies to help us improve GraphDB and develop better features. No personal or sensitive information is collected. By clicking “OK” you consent to our
          <span className="ml-[5.500px] border-b border-dotted border-[#9d2b0c] leading-[18px] font-normal text-[#9d2b0c]">Co</span>
        </div>
        <div className="absolute top-[814px] left-[1458px] flex h-[79px] w-[450px] items-center bg-[#a11422] pl-[19px] text-[18.800px] text-[#f7e3e5] shadow-[0_0_12px_rgba(0,0,0,0.400)]">
          <svg width="26" height="24" viewBox="0 0 26 24" fill="none" stroke="#fff" strokeWidth="1.900" strokeLinejoin="round" strokeLinecap="round">
            <path d="M11.200 2c.8-1.300 2.800-1.300 3.600 0l9.600 17.500c.8 1.500-.2 3-1.800 3H3.400c-1.600 0-2.600-1.500-1.800-3zM13 6.500v8" />
            <circle cx="13" cy="18.500" r=".7" fill="#fff" />
          </svg>
          <span className="ml-[15px] pb-px">Could not upload file;</span>
        </div>
      </div>
      <Taskbar />
    </div>
  );
}
